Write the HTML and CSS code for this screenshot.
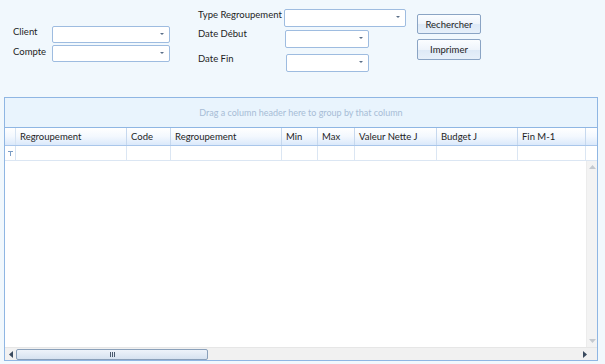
FILE: index.html
```html
<!DOCTYPE html>
<html>
<head>
<meta charset="utf-8">
<link rel="stylesheet" href="styles.css">
</head>
<body>
<div class="top">
  <div class="block-left">
    <span class="lbl">Client</span>
    <div class="combo w118"><span class="arr"></span></div>
    <span class="lbl lc">Compte</span>
    <div class="combo w118"><span class="arr"></span></div>
  </div>
  <div class="block-mid">
    <span class="lbl l1">Type Regroupement</span>
    <div class="combo w122 c1"><span class="arr"></span></div>
    <span class="lbl l2">Date Début</span>
    <div class="combo w84 c2"><span class="arr"></span></div>
    <span class="lbl l3">Date Fin</span>
    <div class="combo w83 c3"><span class="arr"></span></div>
  </div>
  <div class="block-btn">
    <button class="btn">Rechercher</button>
    <button class="btn">Imprimer</button>
  </div>
</div>
<div class="grid">
  <div class="group">Drag a column header here to group by that column</div>
  <div class="hdr">
    <div class="ind"></div>
    <div class="col c-reg">Regroupement</div>
    <div class="col c-code">Code</div>
    <div class="col c-reg">Regroupement</div>
    <div class="col c-min">Min</div>
    <div class="col c-max">Max</div>
    <div class="col c-val">Valeur Nette J</div>
    <div class="col c-bud">Budget J</div>
    <div class="col c-fin">Fin M-1</div>
    <div class="col c-end"></div>
  </div>
  <div class="filt">
    <div class="ind"><svg width="5" height="5" viewBox="0 0 5 5"><path d="M0 0H5V1H3V5H2V1H0Z" fill="#7a9cc4"/></svg></div>
    <div class="fc c-reg"></div>
    <div class="fc c-code"></div>
    <div class="fc c-reg"></div>
    <div class="fc c-min"></div>
    <div class="fc c-max"></div>
    <div class="fc c-val"></div>
    <div class="fc c-bud"></div>
    <div class="fc c-fin"></div>
    <div class="fc c-end"></div>
  </div>
  <div class="body">
    <div class="rows"></div>
    <div class="vscroll">
      <svg width="7" height="4" viewBox="0 0 7 4"><path d="M3.5 0L7 4H0Z" fill="#c4c9cf"/></svg>
      <svg width="7" height="4" viewBox="0 0 7 4"><path d="M0 0H7L3.5 4Z" fill="#c4c9cf"/></svg>
    </div>
  </div>
  <div class="hscroll">
    <svg class="ha" width="4" height="7" viewBox="0 0 4 7"><path d="M4 0V7L0 3.5Z" fill="#3a4a5e"/></svg>
    <div class="thumb"><span class="grip"></span></div>
    <div class="track"></div>
    <svg class="ha" width="4" height="7" viewBox="0 0 4 7"><path d="M0 0V7L4 3.5Z" fill="#3a4a5e"/></svg>
  </div>
</div>
</body>
</html>
```
FILE: styles.css
```css
html, body {
  margin: 0;
  padding: 0;
}
body {
  width: 605px;
  height: 364px;
  background: #f1f8fd;
  font-family: Lato, "Open Sans", sans-serif;
  font-size: 9.5px;
  color: #1e1e1e;
  overflow: hidden;
}
.top {
  display: flex;
  height: 97px;
}
.block-left {
  display: grid;
  grid-template-columns: 39px 118px;
  row-gap: 2px;
  padding: 26px 0 0 13px;
  align-content: start;
  align-items: start;
}
.lc { margin-top: 1px; }
.lbl {
  white-space: nowrap;
  line-height: 12px;
}
.combo {
  position: relative;
  box-sizing: border-box;
  height: 17px;
  background: #fff;
  border: 1px solid #9ebce0;
  border-radius: 2px;
}
.arr {
  position: absolute;
  right: 5px;
  top: 6px;
  width: 0;
  height: 0;
  border-left: 2px solid transparent;
  border-right: 2px solid transparent;
  border-top: 2px solid #5a6f88;
}
.w118 { width: 118px; }
.w122 { width: 122px; height: 18px; }
.w84 { width: 84px; height: 18px; }
.w83 { width: 83px; height: 18px; }
.block-mid {
  display: grid;
  grid-template-columns: 86px auto;
  padding: 8px 0 0 28px;
  align-content: start;
  align-items: start;
}
.l1 { margin-top: 1px; }
.c1 { margin-top: 1px; }
.l2 { margin-top: 1px; }
.c2 { margin-top: 3px; margin-left: 1px; }
.l3 { margin-top: 5px; }
.c3 { margin-top: 6px; margin-left: 2px; }
.block-btn {
  display: flex;
  flex-direction: column;
  gap: 5px;
  padding: 14px 0 0 11px;
}
.btn {
  box-sizing: border-box;
  width: 64px;
  height: 20px;
  margin: 0;
  padding: 0;
  font-family: inherit;
  font-size: 9.5px;
  color: #1e1e1e;
  border: 1px solid #8aa4c4;
  border-radius: 2px;
  background: linear-gradient(#fbfdff 0%, #eef4fb 50%, #dde9f6 51%, #e7f0fa 100%);
}
.btn + .btn { height: 21px; }
.grid {
  box-sizing: border-box;
  width: 594px;
  height: 264px;
  margin-left: 4px;
  border: 1px solid #8fb6e3;
  background: #fff;
  display: flex;
  flex-direction: column;
}
.group {
  height: 30px;
  flex: none;
  background: #e9f4fd;
  color: #a7bcd6;
  font-size: 9px;
  display: flex;
  align-items: center;
  justify-content: center;
  border-bottom: 1px solid #8fb6e3;
  box-sizing: border-box;
}
.hdr {
  display: flex;
  height: 18px;
  flex: none;
  background: linear-gradient(#ffffff 0%, #f3f8fe 50%, #dbe9fb 100%);
  border-bottom: 1px solid #a9c6ea;
  box-sizing: border-box;
}
.ind {
  width: 11px;
  flex: none;
  border-right: 1px solid #d6e3f2;
  box-sizing: border-box;
  display: flex;
  align-items: center;
  justify-content: center;
}
.col {
  flex: none;
  box-sizing: border-box;
  border-right: 1px solid #c6d8ee;
  padding-left: 4px;
  line-height: 17px;
  white-space: nowrap;
  overflow: hidden;
}
.c-reg { width: 111px; }
.c-code { width: 44px; }
.c-min { width: 36px; }
.c-max { width: 37px; }
.c-val { width: 82px; }
.c-bud { width: 81px; }
.c-fin { width: 68px; }
.c-end { width: 11px; border-right: none; }
.filt {
  display: flex;
  height: 15px;
  flex: none;
  border-bottom: 1px solid #dbe6f3;
  box-sizing: border-box;
}
.fc {
  flex: none;
  box-sizing: border-box;
  border-right: 1px solid #dbe6f3;
}
.filt .c-end { border-right: none; }
.body {
  flex: 1;
  display: flex;
}
.rows { flex: 1; }
.vscroll {
  width: 11px;
  background: #f3f3f3;
  border-left: 1px solid #ececec;
  display: flex;
  flex-direction: column;
  justify-content: space-between;
  align-items: center;
  padding: 4px 0;
  box-sizing: border-box;
}
.hscroll {
  height: 13px;
  flex: none;
  display: flex;
  align-items: center;
  background: #f1f1f1;
  border-top: 1px solid #e6e6e6;
  box-sizing: border-box;
  padding: 0 10px 0 4px;
}
.ha { flex: none; }
.thumb {
  box-sizing: border-box;
  width: 192px;
  height: 11px;
  margin-left: 3px;
  border: 1px solid #8aa0ba;
  border-radius: 2px;
  background: linear-gradient(#eef3fa, #d6e2f0);
  display: flex;
  align-items: center;
  justify-content: center;
}
.grip {
  width: 5px;
  height: 5px;
  background: repeating-linear-gradient(90deg, #4a5a6e 0 1px, transparent 1px 2px);
}
.track { flex: 1; }
```
